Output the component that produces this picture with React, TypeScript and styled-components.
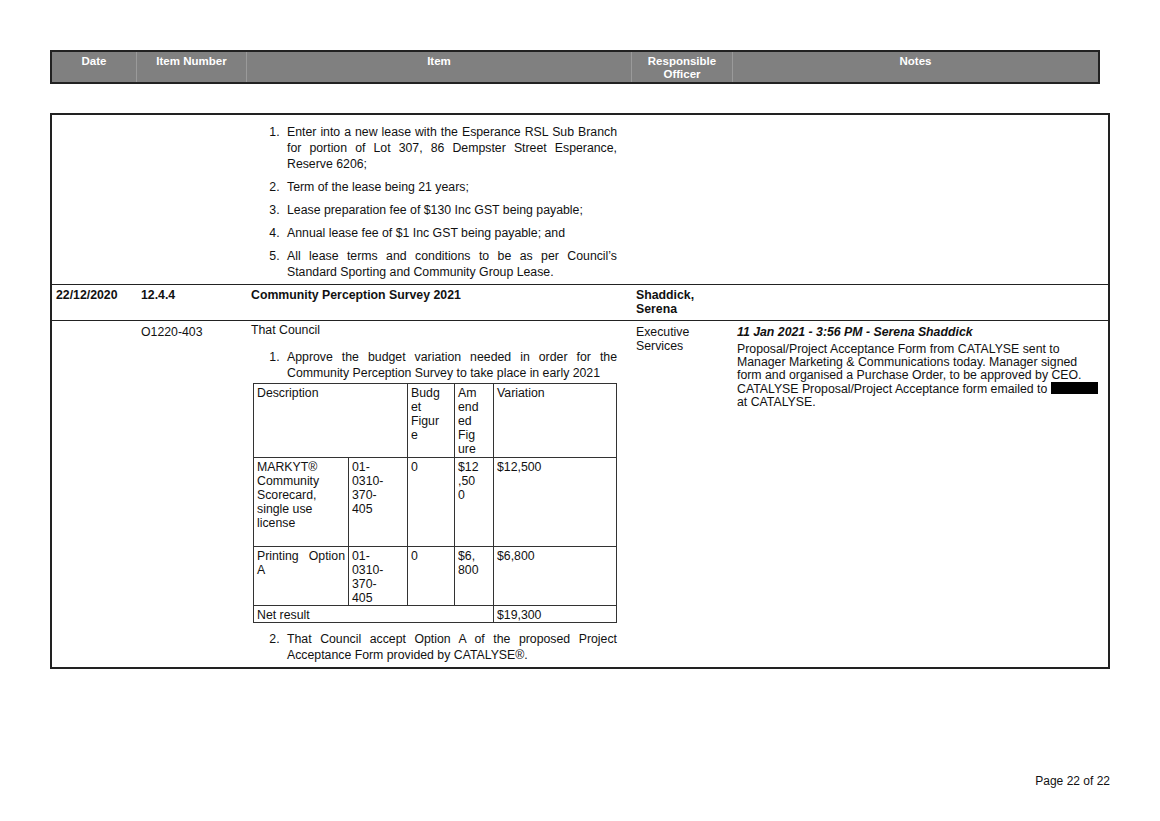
import React from "react";
import styled, { createGlobalStyle } from "styled-components";

const Global = createGlobalStyle`
  html, body { margin: 0; padding: 0; background: #fff; }
  body { font-family: "Liberation Sans", Arial, sans-serif; color: #111; font-size: 12.3px; }
`;

const Page = styled.div`
  width: 1160px; height: 821px; position: relative; padding: 50px 0 0 50px; box-sizing: border-box;
`;

const Header = styled.div`
  width: 1050px; height: 34px; box-sizing: border-box; background: #808080;
  border: 2px solid #222; display: grid; grid-template-columns: 85px 110px 385px 101px 1fr;
`;
const HCell = styled.div`
  color: #fff; font-weight: bold; font-size: 11.5px; text-align: center; line-height: 13px; padding-top: 3px;
  border-right: 1px solid #9a9a9a; &:last-child { border-right: none; }
`;

const Table = styled.div`
  margin-top: 29px; width: 1060px; box-sizing: border-box; border: 2px solid #222;
  display: grid; grid-template-columns: 85px 110px 385px 101px 1fr;
`;
const Cell = styled.div<{ $bold?: boolean; $top?: boolean }>`
  padding: ${p => (p.$top ? "9px 4px 4px 4px" : "3px 4px 4px 4px")};
  font-weight: ${p => (p.$bold ? "bold" : "normal")};
  line-height: 14px;
`;
const Row = styled.div<{ $border?: boolean }>`
  display: contents;
  & > div { border-top: ${p => (p.$border ? "1.5px solid #222" : "none")}; }
`;

const List = styled.ol`
  margin: 0; padding: 0 0 0 32px; width: 366px; box-sizing: border-box;
  & > li { text-align: justify; line-height: 16px; margin-bottom: 7px; padding-left: 4px; }
  & > li:last-child { margin-bottom: 0; }
`;

const Sub = styled.table`
  border-collapse: collapse; width: 364px; margin: 2px 0 8px 2px;
  td { border: 1.5px solid #333; vertical-align: top; padding: 2px 3px 0 3px; line-height: 14px; font-size: 12.3px; }
`;
const Redact = styled.span`
  display: inline-block; width: 47px; height: 12px; background: #000; vertical-align: -1px; margin-right: 3px;
`;
const NoteTitle = styled.div`
  font-weight: bold; font-style: italic; margin-bottom: 4px;
`;
const NoteBody = styled.div`
  line-height: 13px;
`;
const Intro = styled.div`
  margin-bottom: 12px;
`;
const Footer = styled.div`
  position: absolute; right: 50px; top: 774px; font-size: 12px;
`;

export default function App() {
  return (
    <Page>
      <Global />
      <Header>
        <HCell>Date</HCell>
        <HCell>Item Number</HCell>
        <HCell>Item</HCell>
        <HCell>Responsible<br />Officer</HCell>
        <HCell>Notes</HCell>
      </Header>
      <Table>
        <Row>
          <Cell $top />
          <Cell $top />
          <Cell $top>
            <List>
              <li>Enter into a new lease with the Esperance RSL Sub Branch for portion of Lot 307, 86 Dempster Street Esperance, Reserve 6206;</li>
              <li>Term of the lease being 21 years;</li>
              <li>Lease preparation fee of $130 Inc GST being payable;</li>
              <li>Annual lease fee of $1 Inc GST being payable; and</li>
              <li>All lease terms and conditions to be as per Council’s Standard Sporting and Community Group Lease.</li>
            </List>
          </Cell>
          <Cell $top />
          <Cell $top />
        </Row>
        <Row $border>
          <Cell $bold>22/12/2020</Cell>
          <Cell $bold>12.4.4</Cell>
          <Cell $bold>Community Perception Survey 2021</Cell>
          <Cell $bold>Shaddick,<br />Serena</Cell>
          <Cell />
        </Row>
        <Row $border>
          <Cell />
          <Cell style={{ paddingTop: 4 }}>O1220-403</Cell>
          <Cell style={{ paddingTop: 2 }}>
            <Intro>That Council</Intro>
            <List>
              <li>Approve the budget variation needed in order for the Community Perception Survey to take place in early 2021</li>
            </List>
            <Sub>
              <tbody>
                <tr style={{ height: 74 }}>
                  <td colSpan={2}>Description</td>
                  <td style={{ width: 40 }}>Budg<br />et<br />Figur<br />e</td>
                  <td style={{ width: 32 }}>Am<br />end<br />ed<br />Fig<br />ure</td>
                  <td>Variation</td>
                </tr>
                <tr style={{ height: 89 }}>
                  <td style={{ width: 88 }}>MARKYT®<br />Community<br />Scorecard,<br />single use<br />license</td>
                  <td style={{ width: 52 }}>01-<br />0310-<br />370-<br />405</td>
                  <td>0</td>
                  <td>$12<br />,50<br />0</td>
                  <td>$12,500</td>
                </tr>
                <tr style={{ height: 58 }}>
                  <td style={{ textAlign: "justify", textAlignLast: "left" }}>Printing&nbsp; Option A</td>
                  <td>01-<br />0310-<br />370-<br />405</td>
                  <td>0</td>
                  <td>$6,<br />800</td>
                  <td>$6,800</td>
                </tr>
                <tr>
                  <td colSpan={4}>Net result</td>
                  <td>$19,300</td>
                </tr>
              </tbody>
            </Sub>
            <List start={2}>
              <li>That Council accept Option A of the proposed Project Acceptance Form provided by CATALYSE®.</li>
            </List>
          </Cell>
          <Cell style={{ paddingTop: 4 }}>Executive<br />Services</Cell>
          <Cell style={{ paddingTop: 4 }}>
            <NoteTitle>11 Jan 2021 - 3:56 PM - Serena Shaddick</NoteTitle>
            <NoteBody>
              Proposal/Project Acceptance Form from CATALYSE sent to Manager Marketing &amp; Communications today. Manager signed form and organised a Purchase Order, to be approved by CEO. CATALYSE Proposal/Project Acceptance form emailed to <Redact />at CATALYSE.
            </NoteBody>
          </Cell>
        </Row>
      </Table>
      <Footer>Page 22 of 22</Footer>
    </Page>
  );
}
